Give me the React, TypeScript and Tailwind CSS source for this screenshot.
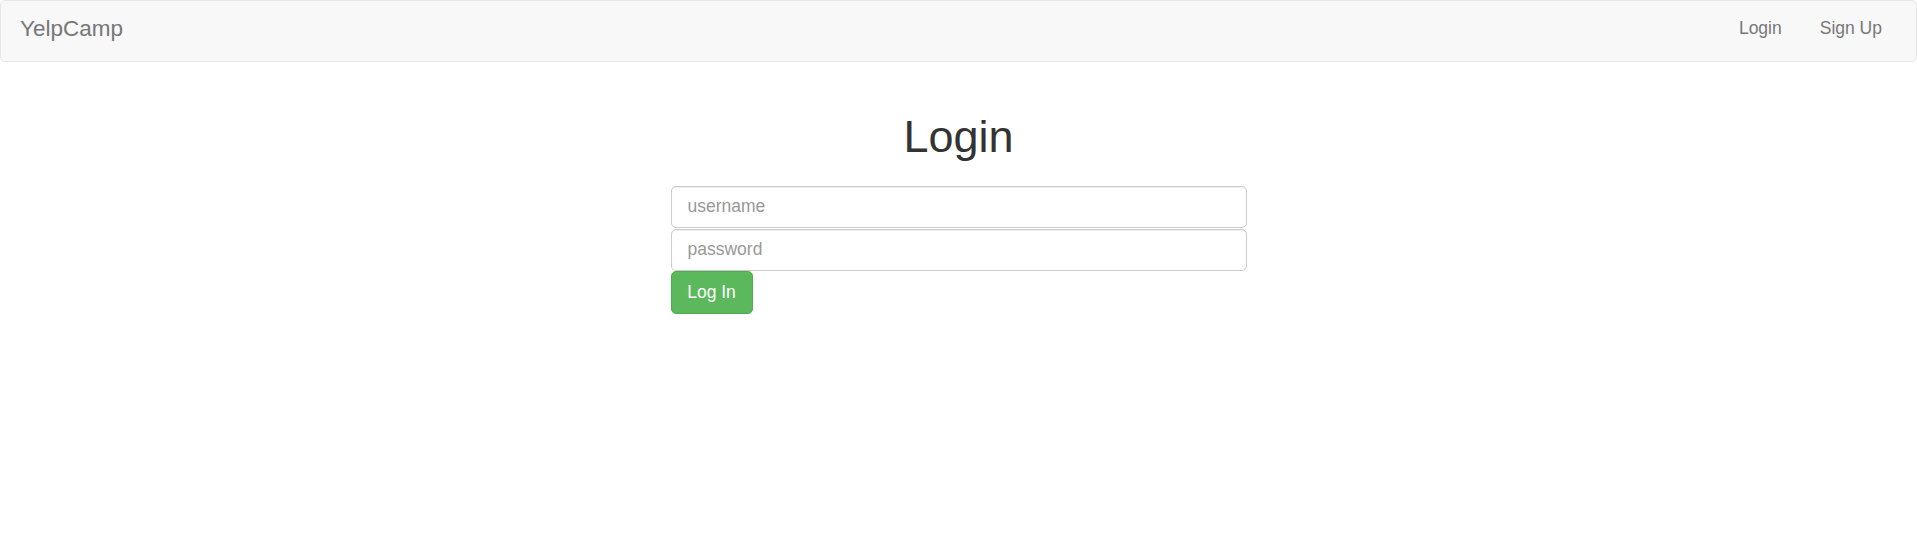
import React from "react";

const NavLink = ({ label }: { label: string }) => (
  <a href="#" className="px-[19px] text-[17.5px] text-[#777] hover:text-[#333]">
    {label}
  </a>
);

export default function App() {
  return (
    <div className="min-h-[552px] bg-white font-['Liberation_Sans',Arial,sans-serif] text-[#333]">
      {/* navbar */}
      <nav className="flex h-[62px] items-center justify-between rounded-[5px] border border-[#e7e7e7] bg-[#f8f8f8] pb-[5px]">
        <a href="#" className="pl-[19px] text-[22.5px] text-[#777]">
          YelpCamp
        </a>
        <div className="flex pr-[15px]">
          <NavLink label="Login" />
          <NavLink label="Sign Up" />
        </div>
      </nav>

      <div className="mx-auto w-[576px] pt-[50px]">
        <h1 className="mb-[24px] text-center text-[45px] font-medium leading-[1.1] text-[#333]">
          Login
        </h1>
        <form className="flex flex-col">
          <input
            type="text"
            placeholder="username"
            className="h-[42px] w-full rounded-[5px] border border-[#ccc] px-[16px] text-[17.5px] text-[#555] shadow-[inset_0_1px_1px_rgba(0,0,0,0.075)] outline-none placeholder:text-[#999]"
          />
          <input
            type="password"
            placeholder="password"
            className="mt-[1px] h-[42px] w-full rounded-[5px] border border-[#ccc] px-[16px] text-[17.5px] text-[#555] shadow-[inset_0_1px_1px_rgba(0,0,0,0.075)] outline-none placeholder:text-[#999]"
          />
          <div>
            <button
              type="button"
              className="h-[43px] w-[82px] rounded-[5px] border border-[#4cae4c] bg-[#5cb85c] text-[17.5px] text-white"
            >
              Log In
            </button>
          </div>
        </form>
      </div>
    </div>
  );
}
